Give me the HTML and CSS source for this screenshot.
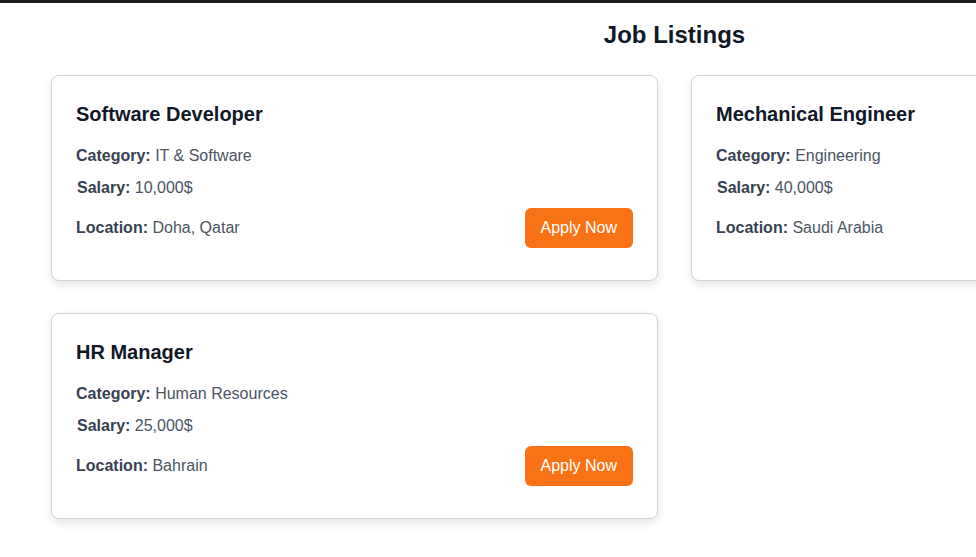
FILE: index.html
```html
<!DOCTYPE html>
<html lang="en">
<head>
<meta charset="utf-8">
<title>Job Listings</title>
<link rel="stylesheet" href="styles.css">
</head>
<body>
<div class="topbar"></div>
<main class="page">
  <h2 class="page-title">Job Listings</h2>
  <div class="grid">
    <article class="card">
      <h3 class="card-title">Software Developer</h3>
      <p class="field"><strong>Category:</strong> IT &amp; Software</p>
      <p class="field salary"><strong>Salary:</strong> 10,000$</p>
      <div class="row">
        <p class="field"><strong>Location:</strong> Doha, Qatar</p>
        <button class="apply">Apply Now</button>
      </div>
    </article>
    <article class="card">
      <h3 class="card-title">Mechanical Engineer</h3>
      <p class="field"><strong>Category:</strong> Engineering</p>
      <p class="field salary"><strong>Salary:</strong> 40,000$</p>
      <div class="row">
        <p class="field"><strong>Location:</strong> Saudi Arabia</p>
        <button class="apply">Apply Now</button>
      </div>
    </article>
    <article class="card">
      <h3 class="card-title">HR Manager</h3>
      <p class="field"><strong>Category:</strong> Human Resources</p>
      <p class="field salary"><strong>Salary:</strong> 25,000$</p>
      <div class="row">
        <p class="field"><strong>Location:</strong> Bahrain</p>
        <button class="apply">Apply Now</button>
      </div>
    </article>
  </div>
</main>
</body>
</html>
```
FILE: styles.css
```css
html, body {
  margin: 0;
  padding: 0;
  background: #ffffff;
  overflow: hidden;
  font-family: "Liberation Sans", Arial, sans-serif;
}

.topbar {
  height: 3px;
  background: #1c1c1e;
}

.page {
  width: 1349px;
  box-sizing: border-box;
  padding: 18px 51px 40px;
}

.page-title {
  margin: 0 0 26px;
  font-size: 24px;
  line-height: 28px;
  font-weight: 700;
  color: #111827;
  text-align: center;
}

.grid {
  display: grid;
  grid-template-columns: 607px 607px;
  column-gap: 33px;
  row-gap: 32px;
}

.card {
  background: #ffffff;
  border: 1px solid #d4d4d8;
  border-radius: 8px;
  box-shadow: 0 4px 10px rgba(0, 0, 0, 0.1);
  padding: 25px 24px 24px;
}

.card-title {
  margin: 0 0 17px;
  font-size: 20px;
  line-height: 26px;
  font-weight: 700;
  color: #111827;
}

.field {
  margin: 0;
  font-size: 16px;
  line-height: 24px;
  color: #4b5563;
}

.field strong {
  color: #374151;
  font-weight: 700;
}

.salary {
  margin-top: 8px;
  padding-left: 1px;
}

.row {
  display: flex;
  align-items: center;
  justify-content: space-between;
  height: 40px;
  margin: 8px 0 8px;
}

.apply {
  height: 40px;
  padding: 0 16px;
  border: none;
  border-radius: 6px;
  background: #f97316;
  color: #ffffff;
  font-family: "Liberation Sans", Arial, sans-serif;
  font-size: 16px;
  line-height: 40px;
  cursor: pointer;
}
```
